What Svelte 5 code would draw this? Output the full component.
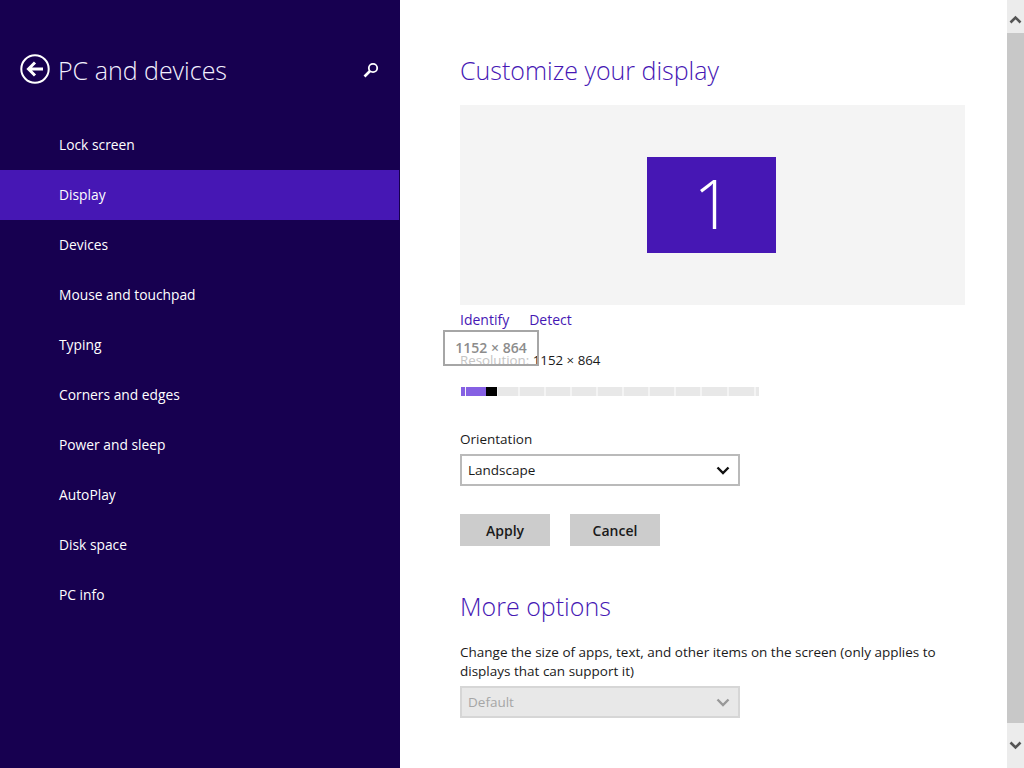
<script lang="ts">
	const items = [
		'Lock screen', 'Display', 'Devices', 'Mouse and touchpad', 'Typing',
		'Corners and edges', 'Power and sleep', 'AutoPlay', 'Disk space', 'PC info'
	];
	let selected = $state('Display');
	// tick segments of the resolution slider
	const ticks = [24, 24, 24, 24, 24, 24, 24, 25, 25];
</script>

<div class="screen">
	<aside class="side">
		<header class="side-head">
			<button class="back" aria-label="Back">
				<svg width="32" height="32" viewBox="0 0 32 32">
					<circle cx="15" cy="15" r="13.7" fill="none" stroke="#fff" stroke-width="2" />
					<path d="M23 15H9M15 8.500L8.500 15l6.500 6.500" fill="none" stroke="#fff" stroke-width="3" />
				</svg>
			</button>
			<h1>PC and devices</h1>
			<svg class="search" width="16" height="16" viewBox="0 0 16 16">
				<circle cx="10" cy="6" r="4.200" fill="none" stroke="#fff" stroke-width="1.800" />
				<path d="M7 9L1.500 14.500" stroke="#fff" stroke-width="2.600" fill="none" />
			</svg>
		</header>
		<nav class="nav">
			{#each items as item}
				<button class="nav-item" class:active={item === selected} onclick={() => (selected = item)}>{item}</button>
			{/each}
		</nav>
	</aside>

	<main class="content">
		<h2>Customize your display</h2>
		<div class="preview">
			<div class="monitor">1</div>
		</div>
		<div class="links">
			<span>Identify</span>
			<span>Detect</span>
		</div>
		<div class="resolution">
			<span class="res-label">Resolution:</span> 1152 × 864
			<div class="tip">1152 × 864</div>
		</div>
		<div class="slider">
			<i class="s-start"></i>
			<i class="s-fill"></i>
			<i class="s-thumb"></i>
			<i class="s-first"></i>
			{#each ticks as w}
				<i class="s-tick" style="width: {w}px"></i>
			{/each}
			<i class="s-end"></i>
		</div>

		<div class="field-label">Orientation</div>
		<div class="select">
			<span>Landscape</span>
			<svg width="14" height="9" viewBox="0 0 14 9"><path d="M1.500 1.500L7 7l5.500-5.500" fill="none" stroke="#111" stroke-width="2.400" /></svg>
		</div>

		<div class="actions">
			<button>Apply</button>
			<button>Cancel</button>
		</div>

		<h2 class="more">More options</h2>
		<p class="desc">Change the size of apps, text, and other items on the screen (only applies to displays that can support it)</p>
		<div class="select disabled">
			<span>Default</span>
			<svg width="14" height="9" viewBox="0 0 14 9"><path d="M1.500 1.500L7 7l5.500-5.500" fill="none" stroke="#999" stroke-width="2.400" /></svg>
		</div>
	</main>

	<div class="scrollbar">
		<div class="arrow">
			<svg width="13" height="9" viewBox="0 0 13 9"><path d="M1.500 7.500l5-5 5 5" fill="none" stroke="#555" stroke-width="2.600" /></svg>
		</div>
		<div class="thumb"></div>
		<div class="arrow">
			<svg width="13" height="9" viewBox="0 0 13 9"><path d="M1.500 1.500l5 5 5-5" fill="none" stroke="#555" stroke-width="2.600" /></svg>
		</div>
	</div>
</div>

<style>
	:global(body) {
		margin: 0;
		background: #fff;
	}
	.screen {
		display: flex;
		width: 1024px;
		height: 768px;
		overflow: hidden;
		font-family: 'Open Sans', 'Noto Sans', sans-serif;
		font-size: 13.5px;
		color: #1a1a1a;
	}
	button {
		font-family: inherit;
		border: none;
		padding: 0;
		cursor: pointer;
	}

	/* ---- sidebar ---- */
	.side {
		width: 399px;
		flex-shrink: 0;
		margin-right: 1px;
		background: #170050;
		color: #fff;
		box-shadow: 1px 0 0 #170050;
	}
	.side-head {
		display: flex;
		align-items: center;
		height: 40px;
		padding: 50px 20px 30px 20px;
	}
	.back {
		width: 32px;
		height: 32px;
		margin-right: 6px;
		background: none;
		line-height: 0;
	}
	h1 {
		flex: 1;
		margin: 0;
		font-size: 25px;
		font-weight: 300;
		color: #f3f0ff;
	}
	.nav {
		display: flex;
		flex-direction: column;
	}
	.nav-item {
		height: 50px;
		padding: 0 0 2px 59px;
		text-align: left;
		font-size: 13.8px;
		background: none;
		color: #fff;
	}
	.nav-item.active {
		background: #4617b4;
	}

	/* ---- content ---- */
	.content {
		flex: 1;
		min-width: 0;
		padding: 50px 42px 0 60px;
	}
	h2 {
		margin: 0;
		font-size: 25px;
		line-height: 40px;
		font-weight: 300;
		color: #4617b4;
	}
	.preview {
		display: flex;
		align-items: center;
		justify-content: center;
		height: 200px;
		margin-top: 15px;
		background: #f4f4f4;
	}
	.monitor {
		width: 129px;
		height: 96px;
		margin: 0 2px 1px 0;
		background: #4617b4;
		color: #fff;
		text-align: center;
		text-indent: 3px;
		font-size: 68px;
		font-weight: 300;
		line-height: 92px;
	}
	.links {
		display: flex;
		gap: 20px;
		margin-top: 5px;
		font-size: 14px;
		line-height: 20px;
		color: #4617b4;
	}
	.resolution {
		position: relative;
		margin-top: 20px;
		font-size: 13.3px;
		line-height: 20px;
	}
	.res-label {
		color: #c4c4c4;
	}
	.tip {
		position: absolute;
		left: -17px;
		top: -20px;
		width: 92px;
		height: 32px;
		border: 2px solid #a6a6a6;
		text-align: center;
		font-size: 14px;
		line-height: 32px;
		font-weight: 600;
		color: #8c8c8c;
	}
	.slider {
		display: flex;
		gap: 2px;
		width: 298px;
		height: 9px;
		margin: 17px 0 0 1px;
		background: #f4f4f4;
	}
	.slider i {
		display: block;
		flex-shrink: 0;
		height: 100%;
		background: #e8e8e8;
	}
	.slider .s-start {
		width: 4px;
		background: #8560e3;
	}
	.slider .s-fill {
		width: 20px;
		margin-left: -1px;
		background: #8560e3;
	}
	.slider .s-thumb {
		width: 11px;
		margin-left: -2px;
		background: #000;
	}
	.slider .s-first {
		width: 20px;
		margin-left: -1px;
	}
	.slider .s-end {
		width: 3px;
	}
	.field-label {
		margin-top: 33px;
		line-height: 20px;
	}
	.select {
		display: flex;
		align-items: center;
		justify-content: space-between;
		box-sizing: border-box;
		width: 280px;
		height: 32px;
		margin-top: 5px;
		padding: 0 8px 0 6px;
		border: 2px solid #bababa;
		background: #fff;
	}
	.select.disabled {
		background: #e8e8e8;
		border-color: #d6d6d6;
		color: #a6a6a6;
	}
	.actions {
		display: flex;
		gap: 20px;
		margin-top: 28px;
	}
	.actions button {
		width: 90px;
		height: 32px;
		background: #cccccc;
		color: #1a1a1a;
		font-size: 14px;
		font-weight: 600;
	}
	.more {
		margin-top: 40px;
	}
	.desc {
		margin: 17px 0 0;
		line-height: 19px;
	}

	/* ---- scrollbar ---- */
	.scrollbar {
		display: flex;
		flex-direction: column;
		width: 17px;
		flex-shrink: 0;
		background: #ececec;
	}
	.arrow {
		display: flex;
		align-items: center;
		justify-content: center;
		height: 33px;
	}
	.arrow:first-child {
		padding-top: 6px;
		box-sizing: border-box;
	}
	.arrow:last-child {
		height: 45px;
	}
	.thumb {
		flex: 1;
		background: #c8c8c8;
	}
</style>
